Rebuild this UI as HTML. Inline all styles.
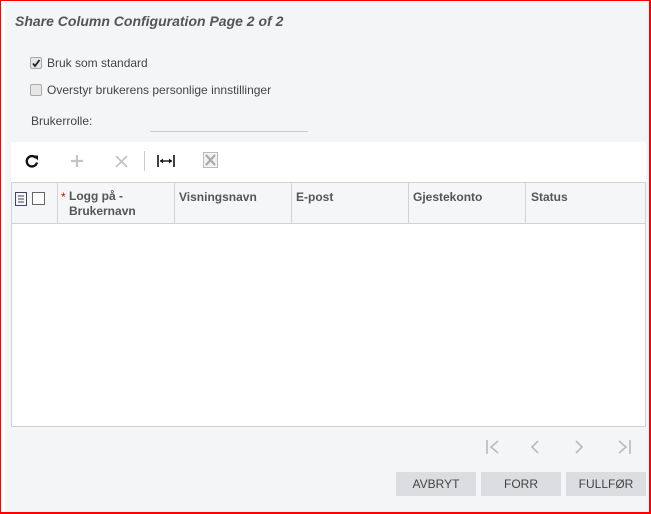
<!DOCTYPE html>
<html><head><style>
*{box-sizing:border-box;margin:0;padding:0}
body{width:651px;height:514px;overflow:hidden;background:#fff;font-family:"Liberation Sans",Arial,sans-serif;position:relative}
.frame{position:absolute;left:0;top:0;width:651px;height:514px;border:1px solid #f00;border-right-width:2px;border-bottom-width:2px;}
.bg{position:absolute;left:5px;top:1px;width:644px;height:511px;background:#f4f5f7}
.strip{position:absolute;left:1px;top:1px;width:4px;height:511px;background:#fff}
.t{position:absolute;font-size:12px;color:#444;white-space:nowrap}
.cb{position:absolute;width:12px;height:12px;border:1px solid #aaa;border-radius:2px;background:#e6e6e6}
.tool{position:absolute;left:11px;top:142px;width:635px;height:40px;background:#fff}
.grid{position:absolute;left:11px;top:182px;width:635px;height:245px;background:#fff;border:1px solid #d0d2d6}
.hdr{position:absolute;left:0;top:0;width:633px;height:41px;background:#f5f6f8;border-bottom:1px solid #d0d2d6}
.col{position:absolute;top:0;height:40px;border-left:1px solid #d0d2d6}
.h{position:absolute;font-size:12px;font-weight:bold;color:#555;top:7px}
.btn{position:absolute;top:472px;height:24px;background:#dcdde0;font-size:12px;color:#444;text-align:center;line-height:24px}
svg{position:absolute}
</style></head><body>
<div class="bg"></div><div class="strip"></div>
<div class="t" style="left:15px;top:13px;font-size:14px;font-weight:bold;font-style:italic;color:#555">Share Column Configuration Page 2 of 2</div>
<div class="cb" style="left:30px;top:57px"></div>
<svg style="left:30px;top:57px" width="12" height="12"><path d="M3 6.5 L5 9 L9.5 3" stroke="#222" stroke-width="1.8" fill="none"/></svg>
<div class="t" style="left:47px;top:56px">Bruk som standard</div>
<div class="cb" style="left:30px;top:84px"></div>
<div class="t" style="left:47px;top:83px">Overstyr brukerens personlige innstillinger</div>
<div class="t" style="left:31px;top:114px">Brukerrolle:</div>
<div style="position:absolute;left:150px;top:131px;width:158px;height:1px;background:#ccc"></div>
<div class="tool"></div>
<svg style="left:24px;top:153px" width="16" height="16"><path d="M12 5 A5.2 5.2 0 1 0 13 9.5" stroke="#111" stroke-width="2.3" fill="none"/><path d="M9 2.5 L14 2.5 L14 7.5 Z" fill="#111"/></svg>
<svg style="left:70px;top:154px" width="14" height="14"><path d="M7 1V13M1 7H13" stroke="#c4c4c4" stroke-width="2.2"/></svg>
<svg style="left:115px;top:155px" width="13" height="13"><path d="M1 1L12 12M12 1L1 12" stroke="#c4c4c4" stroke-width="1.8"/></svg>
<div style="position:absolute;left:144px;top:151px;width:1px;height:20px;background:#ccc"></div>
<svg style="left:157px;top:154px" width="18" height="14"><path d="M1 1V13M17 1V13" stroke="#111" stroke-width="1.6"/><path d="M3 7H15" stroke="#111" stroke-width="1.4"/><path d="M3 7L6 4.5V9.5Z M15 7L12 4.5V9.5Z" fill="#111"/></svg>
<svg style="left:203px;top:152px" width="15" height="16"><rect x="0.5" y="0.5" width="14" height="15" fill="#f2f2f2" stroke="#bbb"/><path d="M3 3L12 13M12 3L3 13" stroke="#aaa" stroke-width="2.2"/></svg>
<div class="grid"><div class="hdr">
<svg style="left:3px;top:9px" width="12" height="14"><rect x="0.5" y="0.5" width="11" height="13" fill="none" stroke="#446"/><path d="M3 4H9M3 7H9M3 10H9" stroke="#446"/></svg>
<div style="position:absolute;left:20px;top:9px;width:13px;height:13px;border:1px solid #666;background:#fff"></div>
<div class="col" style="left:45px"></div>
<div class="h" style="left:49px;color:#e00;font-weight:normal">*</div>
<div class="h" style="left:57px;line-height:15px;top:6px">Logg på -<br>Brukernavn</div>
<div class="col" style="left:162px"></div><div class="h" style="left:167px">Visningsnavn</div>
<div class="col" style="left:279px"></div><div class="h" style="left:284px">E-post</div>
<div class="col" style="left:396px"></div><div class="h" style="left:401px">Gjestekonto</div>
<div class="col" style="left:513px"></div><div class="h" style="left:519px">Status</div>
</div></div>
<svg style="left:486px;top:440px" width="14" height="14"><path d="M1 0V14M12 1L5 7L12 13" stroke="#bbb" stroke-width="1.6" fill="none"/></svg>
<svg style="left:530px;top:440px" width="10" height="14"><path d="M8 1L2 7L8 13" stroke="#bbb" stroke-width="1.6" fill="none"/></svg>
<svg style="left:574px;top:440px" width="10" height="14"><path d="M2 1L8 7L2 13" stroke="#bbb" stroke-width="1.6" fill="none"/></svg>
<svg style="left:617px;top:440px" width="14" height="14"><path d="M13 0V14M2 1L9 7L2 13" stroke="#bbb" stroke-width="1.6" fill="none"/></svg>
<div class="btn" style="left:396px;width:80px">AVBRYT</div>
<div class="btn" style="left:481px;width:80px">FORR</div>
<div class="btn" style="left:566px;width:80px">FULLFØR</div>
<div class="frame"></div>
</body></html>
